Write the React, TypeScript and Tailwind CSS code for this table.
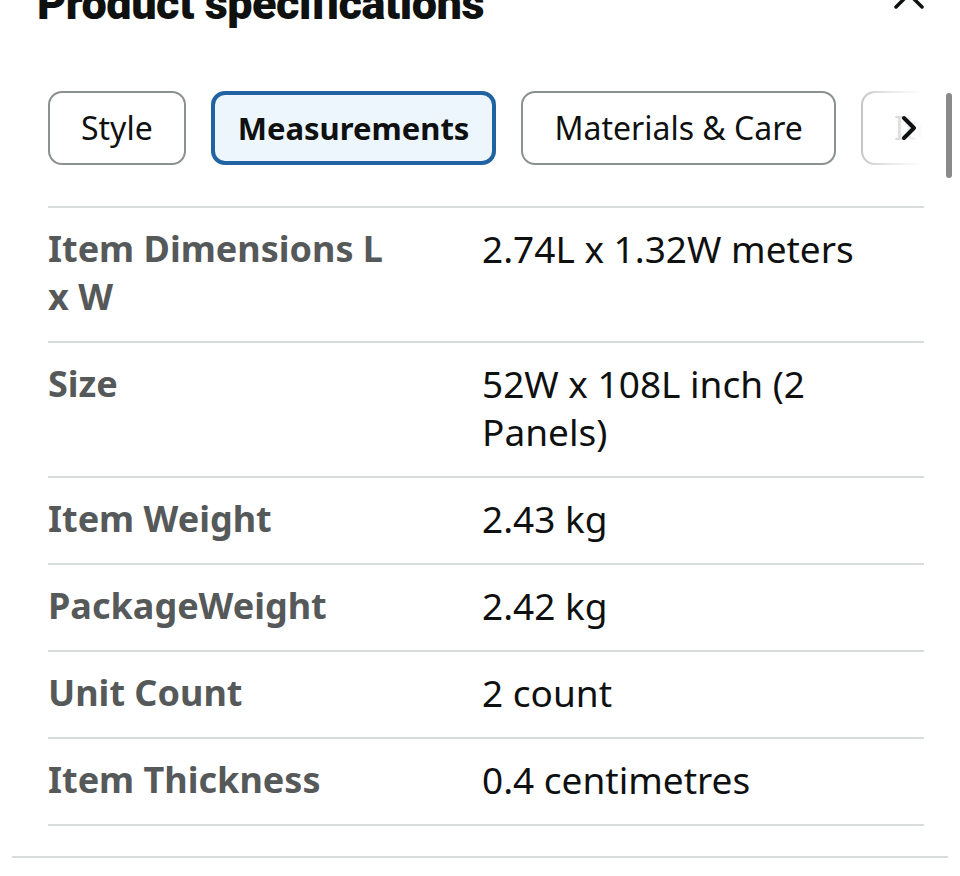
import React from 'react'

const rows = [
  { label: 'Item Dimensions L x W', value: '2.74L x 1.32W meters' },
  { label: 'Size', value: '52W x 108L inch (2 Panels)' },
  { label: 'Item Weight', value: '2.43 kg' },
  { label: 'PackageWeight', value: '2.42 kg' },
  { label: 'Unit Count', value: '2 count' },
  { label: 'Item Thickness', value: '0.4 centimetres' },
]

const tabs = ['Style', 'Measurements', 'Materials & Care', 'Item details']

export default function App() {
  return (
    <div
      className="relative w-[960px] h-[876px] overflow-hidden bg-white text-[#0f1111]"
      style={{ fontFamily: '"Noto Sans", "Open Sans", sans-serif' }}
    >
      <div className="flex items-start -mt-[18px] h-[44px] pl-[37px]">
        <h2
          className="text-[45px] leading-[44px] font-black tracking-[-0.5px] text-[#0f1111]"
          style={{ fontFamily: 'Roboto, sans-serif' }}
        >
          Product specifications
        </h2>
      </div>
      <svg
        className="absolute left-[893px] top-[-22px]"
        width="32"
        height="32"
        viewBox="0 0 32 32"
        fill="none"
        stroke="#0f1111"
        strokeWidth="3.5"
        strokeLinecap="round"
      >
        <path d="M3 3 L29 29 M29 3 L3 29" />
      </svg>

      <div className="relative mt-[65px] ml-[48px] w-[876px] overflow-hidden">
        <div className="flex gap-[25px] whitespace-nowrap">
          {tabs.map((t) =>
            t === 'Measurements' ? (
              <div
                key={t}
                className="h-[74px] px-[23px] flex items-center rounded-[14px] border-[4px] border-[#2162a1] bg-[#edf5fd] text-[31px] font-bold text-[#0f1111]"
              >
                {t}
              </div>
            ) : (
              <div
                key={t}
                className="h-[74px] px-[31px] flex items-center rounded-[14px] border-2 border-[#8d9090] bg-white text-[32px] text-[#0f1111]"
              >
                {t}
              </div>
            )
          )}
        </div>
        <div className="absolute top-0 right-0 h-[74px] w-[70px] bg-gradient-to-r from-white/40 via-white/80 to-white flex items-center pl-[47px]">
          <svg width="16" height="26" viewBox="0 0 16 26" fill="none" stroke="#0f1111" strokeWidth="4" strokeLinecap="round" strokeLinejoin="round">
            <path d="M3 3 L13 13 L3 23" />
          </svg>
        </div>
      </div>
      <div className="absolute left-[946px] top-[93px] w-[6px] h-[85px] rounded-full bg-[#8a8a8a]" />

      <div className="mt-[41px] ml-[48px] w-[876px] border-t-2 border-[#d9dcdc]">
        {rows.map((r) => (
          <div key={r.label} className="flex border-b-2 border-[#d9dcdc] pt-[17px] pb-[20px] leading-[48px]">
            <div className="w-[434px] pr-[80px] text-[36px] font-bold text-[#565959]">{r.label}</div>
            <div className="flex-1 pr-[40px] text-[37px] text-[#0f1111]">{r.value}</div>
          </div>
        ))}
      </div>
      <div className="mt-[30px] ml-[12px] w-[936px] h-[2px] bg-[#d9dcdc]" />
    </div>
  )
}
